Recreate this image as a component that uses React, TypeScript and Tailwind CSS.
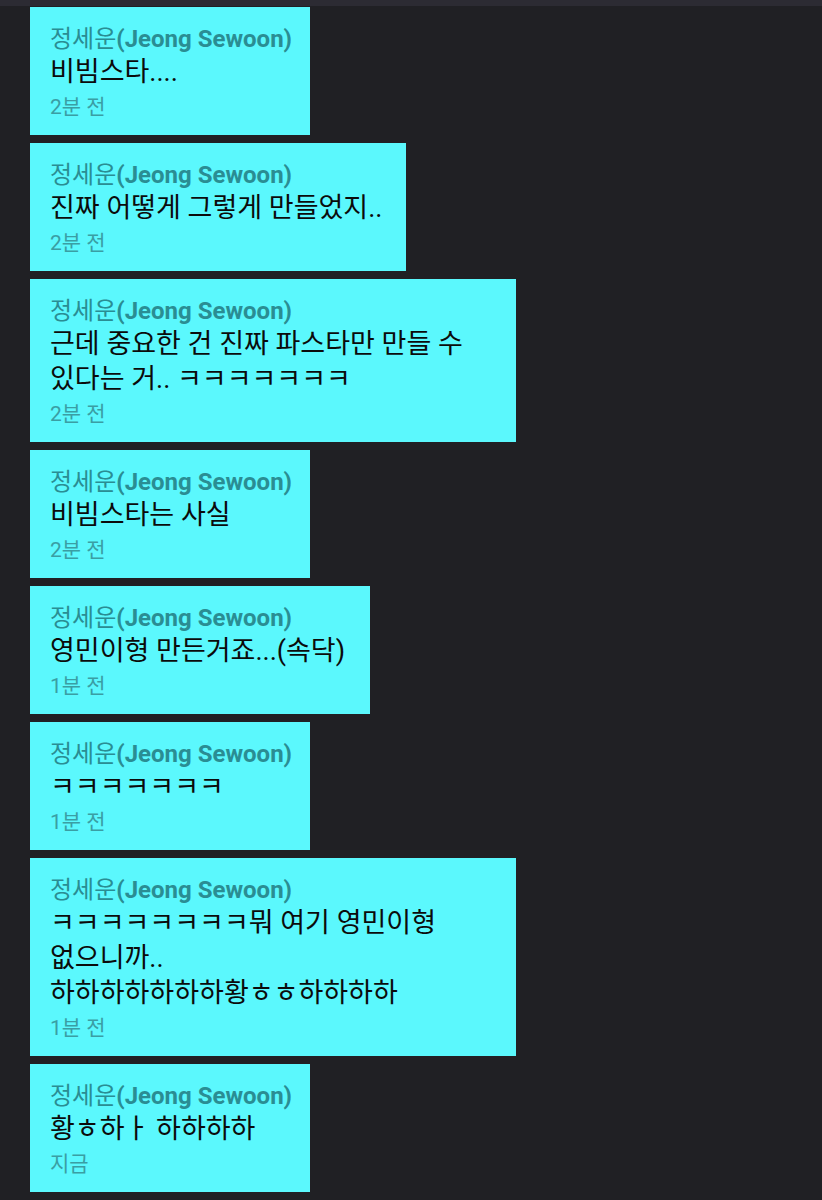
import React from 'react';

interface Message {
  lines: string[];
  time: string;
  width: string;
}

const messages: Message[] = [
  { lines: ['비빔스타....'], time: '2분 전', width: 'w-[280px]' },
  { lines: ['진짜 어떻게 그렇게 만들었지..'], time: '2분 전', width: 'w-[376px]' },
  { lines: ['근데 중요한 건 진짜 파스타만 만들 수', '있다는 거.. ㅋㅋㅋㅋㅋㅋㅋ'], time: '2분 전', width: 'w-[486px]' },
  { lines: ['비빔스타는 사실'], time: '2분 전', width: 'w-[280px]' },
  { lines: ['영민이형 만든거죠...(속닥)'], time: '1분 전', width: 'w-[340px]' },
  { lines: ['ㅋㅋㅋㅋㅋㅋㅋ'], time: '1분 전', width: 'w-[280px]' },
  {
    lines: ['ㅋㅋㅋㅋㅋㅋㅋㅋ뭐 여기 영민이형', '없으니까..', '하하하하하하하황ㅎㅎ하하하하'],
    time: '1분 전',
    width: 'w-[486px]',
  },
  { lines: ['황ㅎ하ㅏ 하하하하'], time: '지금', width: 'w-[280px]' },
];

function ChatCard({ message }: { message: Message }) {
  return (
    <div className={`${message.width} bg-[#5bf8fd] pl-5 pr-4 pt-[16px] pb-[11px]`}>
      <div className="text-[24px] leading-[32px] font-bold text-[#2a8d93] whitespace-nowrap">
        <span className="font-normal">정세운</span>(Jeong Sewoon)
      </div>
      {message.lines.map((line, i) => (
        <div key={i} className="text-[27px] leading-[35px] text-[#0b0b0b] whitespace-nowrap">
          {line}
        </div>
      ))}
      <div className="text-[21px] leading-[34px] text-[#3a9ea4]">{message.time}</div>
    </div>
  );
}

export default function App() {
  return (
    <div
      className="min-h-[1200px] bg-[#202024] border-t-[6px] border-[#2c2b33]"
      style={{ fontFamily: 'Roboto, "Noto Sans CJK KR", sans-serif' }}
    >
      <div className="flex flex-col gap-2 pl-[30px] pt-[1px]">
        {messages.map((m, i) => (
          <ChatCard key={i} message={m} />
        ))}
      </div>
    </div>
  );
}
